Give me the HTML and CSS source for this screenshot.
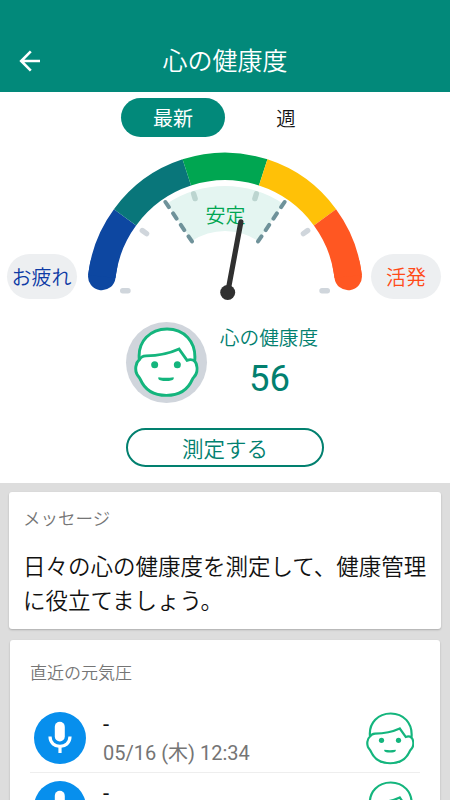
FILE: index.html
```html
<!DOCTYPE html>
<html lang="ja">
<head>
<meta charset="utf-8">
<meta name="viewport" content="width=device-width, initial-scale=1">
<title>心の健康度</title>
<link rel="stylesheet" href="styles.css">
</head>
<body>
<svg class="defs" aria-hidden="true">
  <symbol id="face" viewBox="28 22 194 212">
    <path class="face-skin" d="M44 120C38 64 78 28 127 28S216 64 210 124C219 134 219 154 214 163C210 171 206 173 203 179C189 212 160 227 125 227S61 212 47 179C44 173 40 170 36 162C31 150 32 130 44 120Z"/>
    <path class="face-line" d="M44 120Q50 109 64 108.500C100 108 135 101 163 88L187 122Q200 117 210 124"/>
    <circle class="face-dot" cx="90" cy="135" r="10.500"/>
    <circle class="face-dot" cx="158" cy="135" r="10.500"/>
    <path class="face-dot" d="M101 173Q124 176 147 173V178Q142 184 124 184Q106 184 101 178Z"/>
  </symbol>
  <symbol id="mic" viewBox="0 0 52 52">
    <rect x="20.800" y="9.700" width="10" height="19.800" rx="5" fill="#fff"/>
    <path d="M16 24.500C16 37.700 36 37.700 36 24.500M26 34.500V41" fill="none" stroke="#fff" stroke-width="3.200"/>
  </symbol>
</svg>
<header class="bar">
  <svg class="back" viewBox="0 0 22 22"><path d="M21 11H2.500M11.800 1.400L2.200 11L11.800 20.600"/></svg>
  <h1 class="title">心の健康度</h1>
</header>
<section class="summary">
  <nav class="tabs">
    <span class="tab tab-on">最新</span>
    <span class="tab">週</span>
  </nav>
  <div class="meter">
    <span class="pill pill-low">お疲れ</span>
    <svg class="gauge" viewBox="80 145 290 160">
      <g fill="none" stroke-width="27.500">
        <path d="M101.810 276.500A123.600 123.600 0 0 1 104 264" stroke="#0d47a1" stroke-linecap="round"/>
        <path d="M348.190 276.500A123.600 123.600 0 0 0 346 264" stroke="#ff5722" stroke-linecap="round"/>
        <path d="M101.810 276.500A123.600 123.600 0 0 1 125.010 217.350" stroke="#0d47a1"/>
        <path d="M125.010 217.350A123.600 123.600 0 0 1 186.810 172.450" stroke="#09767a"/>
        <path d="M186.810 172.450A123.600 123.600 0 0 1 263.190 172.450" stroke="#00a651"/>
        <path d="M263.190 172.450A123.600 123.600 0 0 1 324.990 217.350" stroke="#ffc107"/>
        <path d="M324.990 217.350A123.600 123.600 0 0 1 348.190 276.500" stroke="#ff5722"/>
      </g>
      <path d="M166.800 203.800A104 104 0 0 1 283.200 203.800L258 241.100A59 59 0 0 0 192 241.100Z" fill="#e4f5f1"/>
      <g stroke="#d0d6dc" stroke-width="5.400" stroke-linecap="round">
        <path d="M122.700 290.700H128M322 290.700H327.300M142.300 230.500L146.600 233.600M307.700 230.500L303.400 233.600"/>
        <path d="M193.600 193.800L195.100 198.600M256.400 193.800L254.900 198.600" stroke="#bcd5d0"/>
      </g>
      <path d="M165.400 202L193 243M284.600 202L257 243" fill="none" stroke="#6f929a" stroke-width="4" stroke-linecap="round" stroke-dasharray="6.200 7.600"/>
      <text class="zone" x="225.500" y="222.500">安定</text>
      <path d="M228 291L240.900 221.800" stroke="#303030" stroke-width="5.200" stroke-linecap="round"/>
      <circle cx="227.700" cy="292.500" r="7.500" fill="#303030"/>
    </svg>
    <span class="pill pill-high">活発</span>
  </div>
  <div class="result">
    <div class="avatar"><svg class="avatar-face"><use href="#face"/></svg></div>
    <div class="score">
      <div class="score-name">心の健康度</div>
      <div class="score-value">56</div>
    </div>
  </div>
  <button class="measure">測定する</button>
</section>
<main class="cards">
  <section class="card message">
    <h2 class="label">メッセージ</h2>
    <p class="advice">日々の心の健康度を測定して、健康管理に役立てましょう。</p>
  </section>
  <section class="card history">
    <h2 class="label">直近の元気圧</h2>
    <div class="row">
      <span class="mic"><svg><use href="#mic"/></svg></span>
      <div class="entry"><div class="value">-</div><div class="date">05/16 (木) 12:34</div></div>
      <svg class="row-face"><use href="#face"/></svg>
    </div>
    <div class="row">
      <span class="mic"><svg><use href="#mic"/></svg></span>
      <div class="entry"><div class="value">-</div></div>
      <svg class="row-face"><use href="#face"/></svg>
    </div>
  </section>
</main>
</body>
</html>
```
FILE: styles.css
```css
* { box-sizing: border-box; }
html, body { height: 100%; margin: 0; }
body {
  display: flex;
  flex-direction: column;
  height: 800px;
  overflow: hidden;
  background: #fff;
  color: #111;
  font-family: Roboto, "Noto Sans CJK JP", sans-serif;
  font-weight: 350;
}
h1, h2, p { margin: 0; font-weight: inherit; }
.defs { position: absolute; width: 0; height: 0; }

.bar {
  flex: none;
  display: grid;
  grid-template-columns: 40px 1fr 40px;
  align-items: center;
  height: 92px;
  padding: 30px 0 0;
  background: #02897a;
  color: #fff;
}
.back { width: 22px; height: 22px; margin: 0 0 0 19px; fill: none; stroke: #fff; stroke-width: 2.6; }
.title { padding-top: 1px; font-size: 25px; line-height: 36px; text-align: center; }

.summary { flex: none; height: 391px; display: flex; flex-direction: column; }
.tabs { display: flex; height: 53px; padding: 6px 0 0 121px; gap: 20px; }
.tab { width: 82px; height: 39px; padding-top: 2px; line-height: 39px; text-align: center; font-size: 19.500px; }
.tab-on { width: 104px; border-radius: 20px; background: #02897a; color: #fff; font-size: 20px; font-weight: 400; }
.meter { display: flex; height: 160px; padding: 0 9px 0 6.500px; justify-content: space-between; }
.gauge { flex: none; width: 290px; height: 160px; margin: 0 1px 0 3.500px; }
.pill {
  flex: none;
  width: 70px;
  height: 45px;
  margin-top: 109px;
  padding-top: 2px;
  border-radius: 23px;
  background: #edeff1;
  font-size: 20px;
  line-height: 45px;
  text-align: center;
  white-space: nowrap;
}
.pill-low { color: #0d3ba5; }
.pill-high { color: #ff4a17; }
.zone { fill: #00a651; font-size: 20px; text-anchor: middle; }
.result { display: flex; gap: 12px; height: 98px; padding: 17px 0 0 126px; color: #02806f; }
.avatar { display: flex; justify-content: center; width: 81px; height: 81px; padding-top: 5.300px; border-radius: 50%; background: #d0d5dc; }
.avatar-face { width: 64.700px; height: 70.700px; }
.face-skin { fill: #fff; stroke: #14b57d; stroke-width: 8.800; stroke-linejoin: round; }
.face-line { fill: none; stroke: #14b57d; stroke-width: 8.800; stroke-linejoin: miter; }
.face-dot { fill: #14b57d; }
.score { width: 100px; padding-top: 2px; text-align: center; }
.score-name { font-size: 19.700px; line-height: 30px; }
.score-value { margin-top: 4px; padding-left: 1px; font-size: 36.500px; line-height: 42px; font-weight: 400; }
.measure {
  width: 198px;
  height: 39px;
  margin: 25px 0 0 126px;
  padding: 2px 0 0;
  border: 2px solid #02806f;
  border-radius: 20px;
  background: #fff;
  color: #02806f;
  font: inherit;
  font-size: 21.500px;
  line-height: 35px;
}

.cards { flex: 1; min-height: 0; overflow: hidden; padding: 9px; background: #ddd; }
.card { border-radius: 3px; background: #fff; box-shadow: 0 1px 2px rgba(0, 0, 0, .22); }
.message { height: 137px; padding: 14px 5px 0 14px; }
.label { color: #757575; font-size: 17.500px; line-height: 26px; }
.advice { margin-top: 18px; font-size: 22.500px; line-height: 34px; }
.history { height: 220px; margin: 11px 1px 0; padding: 20px 20px 0; }
.history .label { font-size: 17px; }
.row { display: flex; height: 69px; padding: 8px 6px 0 4px; border-bottom: 1px solid #eee; }
.label + .row { margin-top: 18px; }
.mic { flex: none; width: 52px; height: 52px; border-radius: 50%; background: #078fed; }
.mic svg { display: block; width: 52px; height: 52px; }
.entry { flex: 1; padding-left: 17px; }
.value { height: 26px; font-size: 22px; line-height: 26px; font-weight: 400; }
.date { color: #757575; font-size: 20px; line-height: 30px; font-weight: 400; white-space: nowrap; }
.row-face { flex: none; width: 48.500px; height: 53px; margin-top: -.5px; }
```
